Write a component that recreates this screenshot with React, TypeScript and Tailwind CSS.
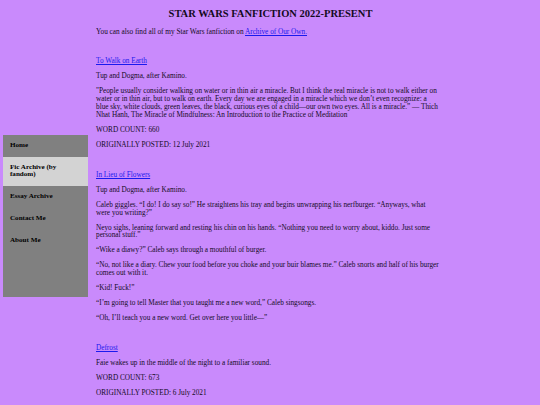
const serif = { fontFamily: '"Liberation Serif", "DejaVu Serif", serif' }

type Story = {
  title: string
  summary: string
  body?: string[]
  words: string
  posted: string
}

const stories: Story[] = [
  {
    title: 'To Walk on Earth',
    summary: 'Tup and Dogma, after Kamino.',
    body: [
      '"People usually consider walking on water or in thin air a miracle. But I think the real miracle is not to walk either on water or in thin air, but to walk on earth. Every day we are engaged in a miracle which we don\u2019t even recognize: a blue sky, white clouds, green leaves, the black, curious eyes of a child\u2014our own two eyes. All is a miracle.\u201d \u2014 Thich Nhat Hanh, The Miracle of Mindfulness: An Introduction to the Practice of Meditation',
    ],
    words: '660',
    posted: '12 July 2021',
  },
  {
    title: 'In Lieu of Flowers',
    summary: 'Tup and Dogma, after Kamino.',
    body: [
      'Caleb giggles. \u201cI do! I do say so!\u201d He straightens his tray and begins unwrapping his nerfburger. \u201cAnyways, what were you writing?\u201d',
      'Neyo sighs, leaning forward and resting his chin on his hands. \u201cNothing you need to worry about, kiddo. Just some personal stuff.\u201d',
      '\u201cWike a diawy?\u201d Caleb says through a mouthful of burger.',
      '\u201cNo, not like a diary. Chew your food before you choke and your buir blames me.\u201d Caleb snorts and half of his burger comes out with it.',
      '\u201cKid! Fuck!\u201d',
      '\u201cI\u2019m going to tell Master that you taught me a new word,\u201d Caleb singsongs.',
      '\u201cOh, I\u2019ll teach you a new word. Get over here you little\u2014\u201d',
    ],
    words: '',
    posted: '',
  },
  {
    title: 'Defrost',
    summary: 'Faie wakes up in the middle of the night to a familiar sound.',
    words: '673',
    posted: '6 July 2021',
  },
]

const nav = ['Home', 'Fic Archive (by fandom)', 'Essay Archive', 'Contact Me', 'About Me']

function Sidebar() {
  return (
    <nav className="ml-[3px] mt-[135px] flex h-[162px] w-[85px] flex-col bg-[#808080]">
      {nav.map((item, i) => (
        <a
          key={item}
          href="#"
          className={
            'block py-[7px] pl-[7px] pr-[12px] text-[7.1px] font-bold leading-[7.7px] text-black ' +
            (i === 1 ? 'bg-[#d3d3d3]' : '')
          }
        >
          {item}
        </a>
      ))}
    </nav>
  )
}

function Spacer() {
  return <div className="h-[7.8px]" />
}

export default function App() {
  return (
    <div className="flex min-h-[405px] w-full bg-[#c98afc] text-[#140a1e]" style={serif}>
      <div className="w-[96px] shrink-0">
        <Sidebar />
      </div>
      <main className="w-[349px] shrink-0 pt-[8px]">
        <h1 className="text-center text-[10.5px] font-bold leading-[12px]">
          STAR WARS FANFICTION 2022-PRESENT
        </h1>
        <div className="mt-[8.5px] flex w-[344px] flex-col gap-[7.2px] text-[7.25px] leading-[7.8px]">
          <p>
            You can also find all of my Star Wars fanfiction on{' '}
            <a href="#" className="text-[#1a1aee] underline">
              Archive of Our Own.
            </a>
          </p>
          {stories.map((s) => (
            <div key={s.title} className="contents">
              <Spacer />
              <a href="#" className="self-start text-[#1a1aee] underline">
                {s.title}
              </a>
              <p>{s.summary}</p>
              {s.body?.map((b, i) => (
                <p key={i}>{b}</p>
              ))}
              {s.words && <p>WORD COUNT: {s.words}</p>}
              {s.posted && <p>ORIGINALLY POSTED: {s.posted}</p>}
            </div>
          ))}
        </div>
      </main>
    </div>
  )
}
